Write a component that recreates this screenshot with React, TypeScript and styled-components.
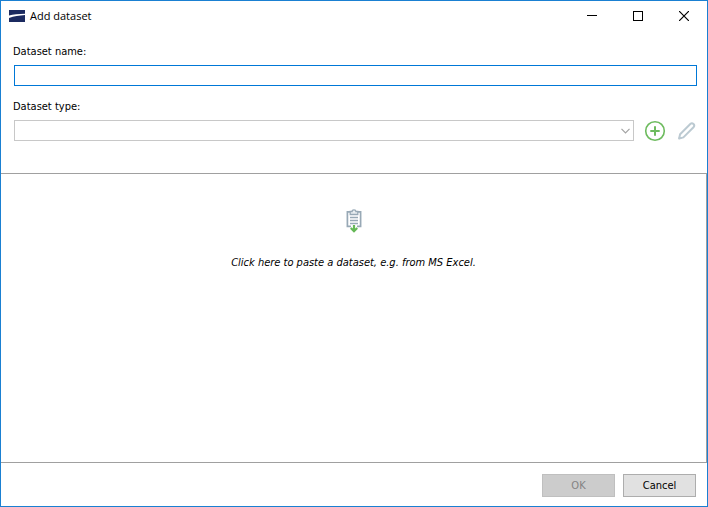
import React, { useState } from "react";
import styled, { createGlobalStyle } from "styled-components";

const GlobalStyle = createGlobalStyle`
  *, *::before, *::after { box-sizing: border-box; }
  body { margin: 0; background: #fff; }
  button, input, select { font: inherit; color: inherit; }
`;

const Dialog = styled.main`
  display: flex;
  flex-direction: column;
  min-height: 100vh;
  border: 1px solid #1a80d2;
  background: #fff;
  color: #000;
  font: 11px/16px Tahoma, "DejaVu Sans Condensed", "Noto Sans", sans-serif;
`;

const TitleBar = styled.header`
  display: flex;
  align-items: center;
  height: 29px;
  padding-left: 8px;
`;

const Title = styled.h1`
  flex: 1;
  margin: 0 0 0 5px;
  font: 400 11px/16px "Open Sans", "Noto Sans", sans-serif;
`;

const WindowButton = styled.button`
  display: grid;
  place-items: center;
  width: 46px;
  height: 28px;
  padding: 0;
  border: 0;
  background: none;
`;

const Form = styled.section`
  display: flex;
  flex-direction: column;
  padding: 14px 10px 32px 13px;
`;

const Label = styled.label`
  align-self: flex-start;
  margin-left: -1px;
  line-height: 16px;
`;

const NameInput = styled.input`
  height: 21px;
  margin: 5px 0 13px;
  padding: 0 4px;
  border: 1px solid #0078d7;
  border-radius: 0;
  background: #fff;
  outline: none;
`;

const TypeRow = styled.div`
  display: flex;
  align-items: center;
  height: 21px;
  margin-top: 5px;
`;

const SelectFrame = styled.div`
  display: grid;
  flex: 1;
  height: 21px;
  margin-right: 10px;
  align-items: center;

  > * { grid-area: 1 / 1; }
  > svg { justify-self: end; margin-right: 4px; pointer-events: none; }
`;

const TypeSelect = styled.select`
  appearance: none;
  width: 100%;
  height: 21px;
  padding: 0 18px 0 4px;
  border: 1px solid #c8c8c8;
  border-radius: 0;
  background: #fff;
  outline: none;
`;

const IconButton = styled.button`
  display: grid;
  place-items: center;
  width: 22px;
  height: 22px;
  padding: 0;
  border: 0;
  background: none;

  & + & { margin-left: 9px; }
`;

const PasteArea = styled.button`
  display: flex;
  flex: 1;
  flex-direction: column;
  align-items: center;
  gap: 22px;
  padding: 35px 0 0;
  border: 1px solid #a0a0a0;
  border-left: 0;
  border-radius: 0;
  background: #fff;
  font-style: italic;
  line-height: 16px;
`;

const Footer = styled.footer`
  display: flex;
  justify-content: flex-end;
  gap: 8px;
  padding: 11px 11px 9px;
`;

const ActionButton = styled.button`
  width: 73px;
  height: 23px;
  padding: 1px 0 0;
  border: 1px solid #adadad;
  border-radius: 0;
  background: #e1e1e1;

  &:disabled {
    border-color: #bfbfbf;
    background: #cccccc;
    color: #838383;
  }
`;

const Logo = () => (
  <svg width="16" height="12" viewBox="0 0 16 12" aria-hidden="true">
    <path d="M0 0h16v12H0z" fill="#1b2a60" />
    <path d="M0 5.4C4 4.6 10 4.1 16 3.8v1.1C10 5.3 5 6.2 0 7.9z" fill="#fff" />
  </svg>
);

const MinimizeIcon = () => (
  <svg width="10" height="10" shapeRendering="crispEdges" aria-hidden="true">
    <path d="M0 4h10v1H0z" />
  </svg>
);

const MaximizeIcon = () => (
  <svg width="10" height="10" shapeRendering="crispEdges" aria-hidden="true">
    <path d="M.5.5h9v9h-9z" fill="none" stroke="#000" />
  </svg>
);

const CloseIcon = () => (
  <svg width="10" height="10" aria-hidden="true">
    <path d="M0 0l10 10M10 0L0 10" stroke="#000" strokeWidth="1.2" />
  </svg>
);

const ChevronIcon = () => (
  <svg width="9" height="6" aria-hidden="true">
    <path d="M.5.8l4 4 4-4" fill="none" stroke="#a3a3a3" strokeWidth="1.2" />
  </svg>
);

const AddIcon = () => (
  <svg width="22" height="22" fill="none" stroke="#6dbb5e" aria-hidden="true">
    <circle cx="11" cy="11" r="9.3" strokeWidth="1.6" />
    <path d="M11 6.3v9.4M6.3 11h9.4" strokeWidth="2" />
  </svg>
);

const EditIcon = () => (
  <svg width="22" height="22" fill="none" stroke="#bccad2" strokeWidth="2" strokeLinejoin="round" aria-hidden="true">
    <path d="M4.1 18.6l1-4.4L15.3 4q1.6-1.6 3.2 0t0 3.2L8.4 17.4z" />
    <path d="M3.9 18.7l.5-2.2 1.8 1.7z" fill="#bccad2" strokeWidth="1" />
  </svg>
);

const PasteIcon = () => (
  <svg width="16" height="24" viewBox="0 0 16 24" fill="none" aria-hidden="true">
    <path d="M4 2.9H1.4v14.4H5M12 2.9h2.6v14.4H11" stroke="#98a9b6" strokeWidth="1.7" />
    <path d="M4.2 2.5h1.9q0-1.7 1.9-1.7t1.9 1.7h1.9v3H4.2z" fill="#e9eef1" stroke="#98a9b6" strokeWidth="1.3" />
    <path d="M4 8.5h8M4 11.5h8M4 14.5h8" stroke="#98a9b6" strokeWidth="1.6" />
    <path d="M8 16v6M4.8 19l3.2 3.2 3.2-3.2" stroke="#65b856" strokeWidth="2.2" />
  </svg>
);

export default function App() {
  const [name, setName] = useState("");

  return (
    <>
      <GlobalStyle />
      <Dialog>
        <TitleBar>
          <Logo />
          <Title>Add dataset</Title>
          <WindowButton aria-label="Minimize"><MinimizeIcon /></WindowButton>
          <WindowButton aria-label="Maximize"><MaximizeIcon /></WindowButton>
          <WindowButton aria-label="Close"><CloseIcon /></WindowButton>
        </TitleBar>
        <Form>
          <Label htmlFor="dataset-name">Dataset name:</Label>
          <NameInput id="dataset-name" value={name} onChange={(e) => setName(e.target.value)} />
          <Label htmlFor="dataset-type">Dataset type:</Label>
          <TypeRow>
            <SelectFrame>
              <TypeSelect id="dataset-type" defaultValue="">
                <option value="" />
              </TypeSelect>
              <ChevronIcon />
            </SelectFrame>
            <IconButton aria-label="Add dataset type"><AddIcon /></IconButton>
            <IconButton aria-label="Edit dataset type" disabled><EditIcon /></IconButton>
          </TypeRow>
        </Form>
        <PasteArea>
          <PasteIcon />
          <span>Click here to paste a dataset, e.g. from MS Excel.</span>
        </PasteArea>
        <Footer>
          <ActionButton disabled>OK</ActionButton>
          <ActionButton>Cancel</ActionButton>
        </Footer>
      </Dialog>
    </>
  );
}
